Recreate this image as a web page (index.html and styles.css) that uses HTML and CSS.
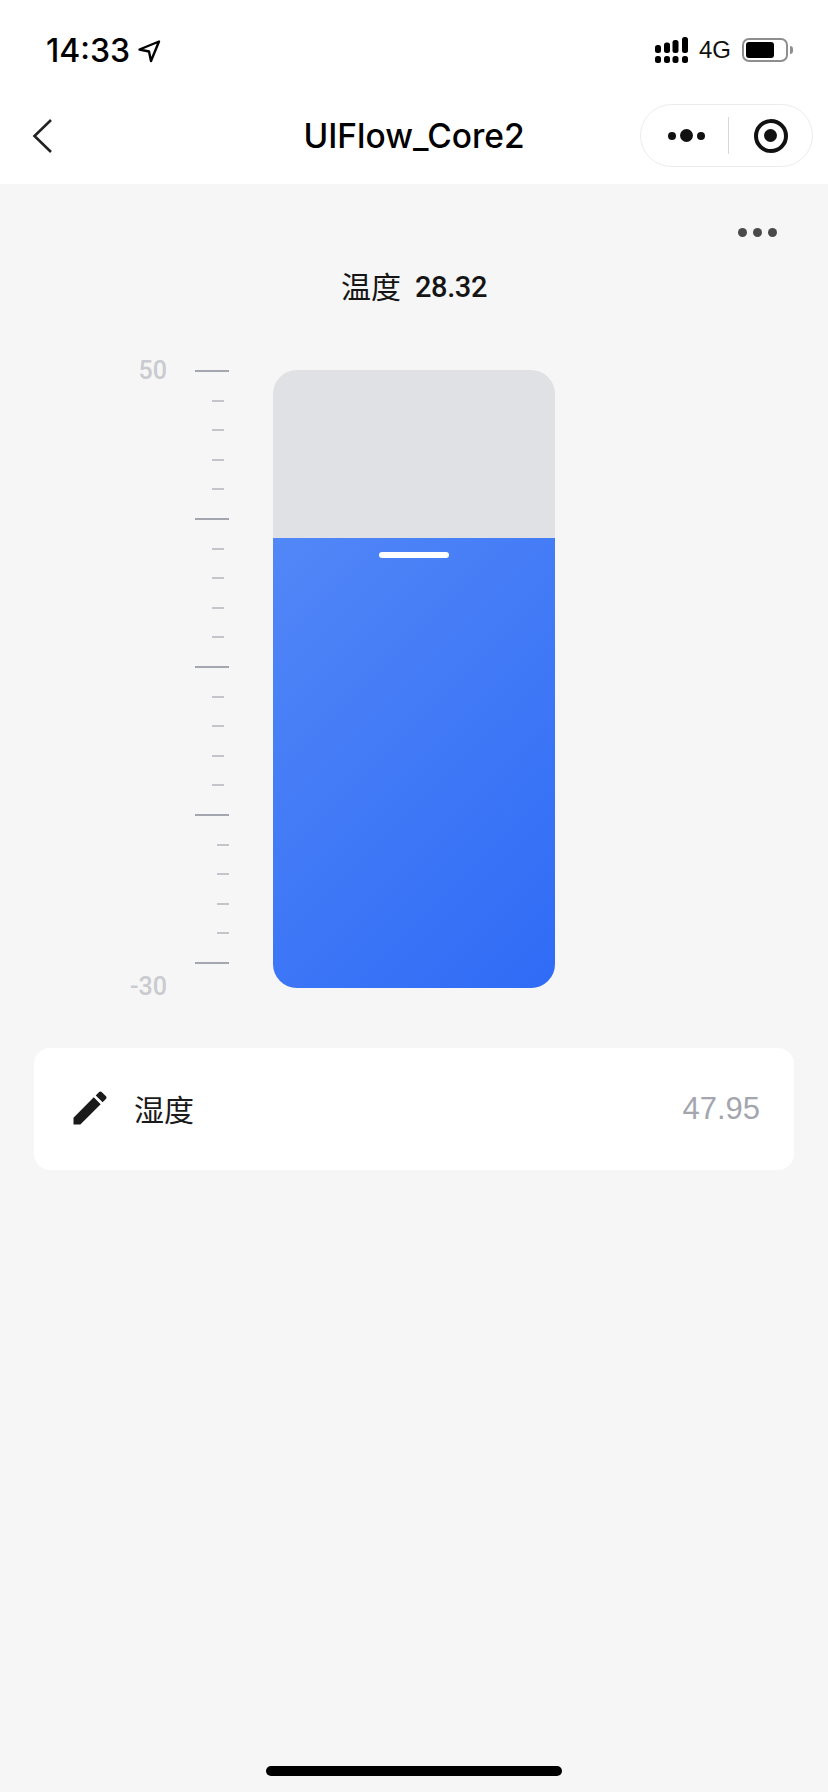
FILE: index.html
```html
<!DOCTYPE html>
<html lang="zh">
<head>
  <meta charset="UTF-8">
  <title>UIFlow_Core2</title>
  <link rel="stylesheet" href="styles.css">
</head>
<body>
  <header class="top">
    <div class="status">
      <div class="status-left">
        <span class="time">14:33</span>
        <svg class="loc" width="24" height="24" viewBox="0 0 24 24"><path d="M22 2.500 2.500 10.500l9.500 2 2 9.500z" fill="none" stroke="#000" stroke-width="2.400" stroke-linejoin="round"/></svg>
      </div>
      <div class="status-right">
        <svg class="signal" width="33" height="26" viewBox="0 0 33 26">
          <rect x="0" y="8" width="6" height="8" rx="2.500"/>
          <rect x="9" y="5.500" width="6" height="10.500" rx="2.500"/>
          <rect x="17.500" y="3" width="6" height="13" rx="2.500"/>
          <rect x="27" y="0" width="6" height="16" rx="2.500"/>
          <rect x="0" y="19" width="6" height="7" rx="2.500"/>
          <rect x="9" y="19" width="6" height="7" rx="2.500"/>
          <rect x="17.500" y="19" width="6" height="7" rx="2.500"/>
          <rect x="27" y="19" width="6" height="7" rx="2.500"/>
        </svg>
        <span class="net">4G</span>
        <div class="battery"><div class="battery-level"></div></div>
        <div class="battery-cap"></div>
      </div>
    </div>
    <nav class="nav">
      <svg class="back" width="22" height="36" viewBox="0 0 22 36"><path d="M19 2 2.500 18 19 34" fill="none" stroke="#222" stroke-width="2.600"/></svg>
      <h1 class="nav-title">UIFlow_Core2</h1>
      <div class="capsule">
        <div class="capsule-btn capsule-menu">
          <span class="dot"></span><span class="dot dot-big"></span><span class="dot"></span>
        </div>
        <div class="capsule-line"></div>
        <div class="capsule-btn">
          <div class="ring"><div class="ring-core"></div></div>
        </div>
      </div>
    </nav>
  </header>

  <main class="content">
    <div class="more">
      <span class="more-dot"></span><span class="more-dot"></span><span class="more-dot"></span>
    </div>
    <div class="reading"><span class="reading-name">温度</span><span class="reading-val">28.32</span></div>

    <section class="gauge">
      <div class="labels"><span>50</span><span>-30</span></div>
      <div class="ticks">
        <i class="major"></i><i></i><i></i><i></i><i></i>
        <i class="major"></i><i></i><i></i><i></i><i></i>
        <i class="major"></i><i></i><i></i><i></i><i></i>
        <i class="major"></i><i class="end"></i><i class="end"></i><i class="end"></i><i class="end"></i>
        <i class="major"></i>
      </div>
      <div class="tank">
        <div class="fill"><div class="handle"></div></div>
      </div>
    </section>

    <section class="card">
      <svg class="pencil" width="44" height="44" viewBox="0 0 24 24"><path d="M3 17.250V21h3.750L17.810 9.940l-3.750-3.750L3 17.250zM20.710 7.040c.39-.39.39-1.020 0-1.410l-2.340-2.340c-.39-.39-1.020-.39-1.410 0l-1.830 1.830 3.750 3.750 1.830-1.830z" fill="#1a1a1a"/></svg>
      <span class="card-name">湿度</span>
      <span class="card-val">47.95</span>
    </section>
  </main>

  <div class="home-bar"></div>
</body>
</html>
```

FILE: styles.css
```css
* {
  box-sizing: border-box;
}

html, body {
  margin: 0;
  height: 1792px;
}

body {
  display: flex;
  flex-direction: column;
  background-color: #f6f6f6;
  color: #111;
  font-family: 'Liberation Sans', 'Noto Sans CJK SC', sans-serif;
  overflow: hidden;
}

.top {
  background-color: #fff;
  height: 184px;
}

.status {
  height: 88px;
  display: flex;
  justify-content: space-between;
  align-items: center;
  padding: 12px 35px 0 46px;
}

.status-left, .status-right {
  display: flex;
  align-items: center;
}

.time {
  font-family: Inter, sans-serif;
  font-size: 32px;
  font-weight: 500;
  color: #000;
}

.loc {
  margin-left: 7px;
  margin-top: 2px;
}

.signal {
  fill: #000;
}

.net {
  margin-left: 11px;
  font-size: 24px;
  color: #111;
}

.battery {
  margin-left: 11px;
  width: 46px;
  height: 24px;
  border: 2px solid #8e8e8e;
  border-radius: 7px;
  padding: 2px;
}

.battery-level {
  width: 28px;
  height: 16px;
  background-color: #000;
  border-radius: 3px;
}

.battery-cap {
  margin-left: 2px;
  width: 3px;
  height: 8px;
  background-color: #8e8e8e;
  border-radius: 0 3px 3px 0;
}

.nav {
  position: relative;
  height: 96px;
  display: flex;
  align-items: center;
  padding: 0 15px 0 32px;
  justify-content: space-between;
}

.nav-title {
  position: absolute;
  left: 0;
  right: 0;
  margin: 0;
  text-align: center;
  font-size: 33.500px;
  font-weight: 500;
  color: #000;
  font-family: Inter, sans-serif;
  pointer-events: none;
}

.capsule {
  width: 173px;
  height: 63px;
  margin-top: -1px;
  border: 1px solid #ececec;
  border-radius: 32px;
  background-color: #fff;
  display: flex;
  align-items: center;
}

.capsule-btn {
  flex: 1;
  display: flex;
  align-items: center;
  justify-content: center;
  gap: 4px;
}

.capsule-menu {
  padding-left: 4px;
}

.capsule-line {
  width: 1px;
  height: 37px;
  background-color: #d8d8d8;
}

.dot {
  width: 8px;
  height: 8px;
  border-radius: 50%;
  background-color: #111;
}

.dot-big {
  width: 13px;
  height: 13px;
}

.ring {
  width: 34px;
  height: 34px;
  border: 4px solid #111;
  border-radius: 50%;
  display: flex;
  align-items: center;
  justify-content: center;
}

.ring-core {
  width: 13px;
  height: 13px;
  border-radius: 50%;
  background-color: #111;
}

.content {
  flex: 1;
  display: flex;
  flex-direction: column;
  padding: 0 34px;
}

.more {
  display: flex;
  justify-content: flex-end;
  gap: 6px;
  padding: 44px 17px 0 0;
}

.more-dot {
  width: 9px;
  height: 9px;
  border-radius: 50%;
  background-color: #4a4a4a;
}

.reading {
  margin-top: 28px;
  margin-bottom: 1px;
  height: 40px;
  display: flex;
  justify-content: center;
  align-items: center;
  gap: 14px;
  color: #151515;
}

.reading-name {
  font-size: 30px;
}

.reading-val {
  margin-top: 4px;
  font-family: Roboto, sans-serif;
  font-size: 29px;
  font-weight: 500;
  letter-spacing: -0.4px;
}

.gauge {
  margin-top: 64px;
  display: flex;
  align-items: flex-start;
  height: 618px;
}

.labels {
  width: 133px;
  height: 644px;
  margin-top: -13px;
  display: flex;
  flex-direction: column;
  justify-content: space-between;
  align-items: flex-end;
  font-family: Roboto, sans-serif;
  font-size: 25px;
  line-height: 28px;
  color: #c9cbd0;
  font-weight: 500;
}

.ticks {
  margin-left: 28px;
  width: 34px;
  height: 594px;
  display: flex;
  flex-direction: column;
  justify-content: space-between;
  align-items: flex-end;
}

.ticks i {
  display: block;
  width: 12px;
  height: 2px;
  margin-right: 5px;
  background-color: #c4c5ca;
}

.ticks .major {
  width: 34px;
  margin-right: 0;
  background-color: #a5a7b0;
}

.ticks .end {
  margin-right: 0;
}

.tank {
  margin-left: 44px;
  width: 282px;
  height: 618px;
  border-radius: 24px;
  background-color: #dfe1e5;
  overflow: hidden;
  display: flex;
  align-items: flex-end;
}

.fill {
  width: 100%;
  height: 450px;
  background: linear-gradient(135deg, #5287f7, #2f6bf6);
  display: flex;
  justify-content: center;
  padding-top: 14px;
}

.handle {
  width: 70px;
  height: 6px;
  border-radius: 3px;
  background-color: #fff;
}

.card {
  margin-top: 60px;
  height: 122px;
  background-color: #fff;
  border-radius: 16px;
  display: flex;
  align-items: center;
  padding: 0 34px 0 34px;
}

.pencil {
  margin-top: -2px;
}

.card-name {
  margin-left: 22px;
  margin-bottom: 2px;
  font-size: 30px;
  color: #1a1a1a;
}

.card-val {
  margin-left: auto;
  font-size: 31px;
  color: #a3a6ae;
}

.home-bar {
  position: absolute;
  left: 266px;
  top: 1766px;
  width: 296px;
  height: 10px;
  border-radius: 5px;
  background-color: #000;
}
```
